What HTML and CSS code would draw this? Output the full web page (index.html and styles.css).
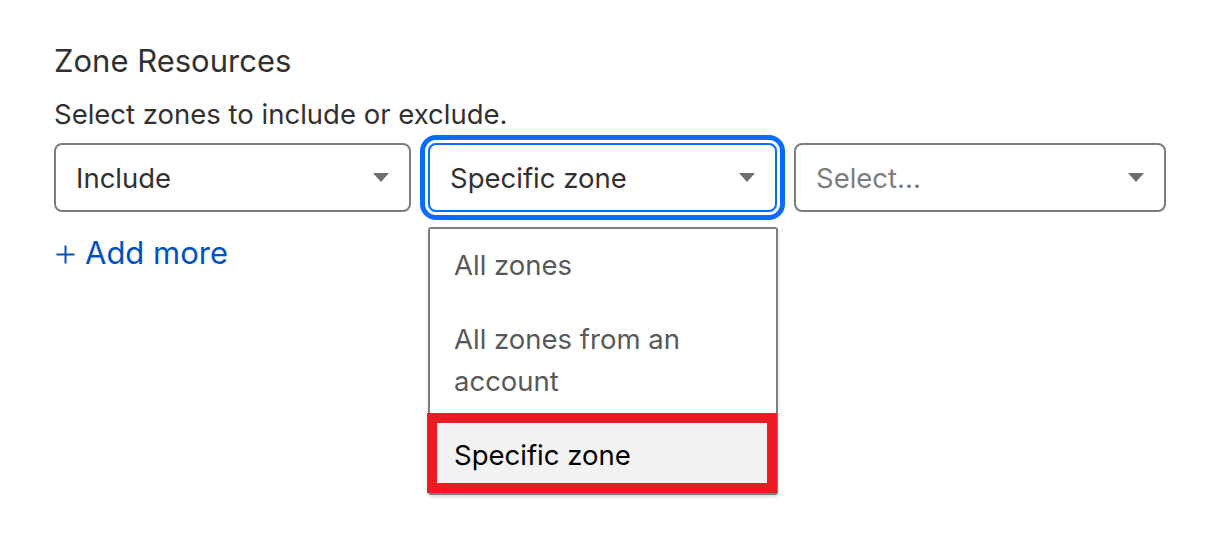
FILE: index.html
```html
<!DOCTYPE html>
<html lang="en">
<head>
    <meta charset="UTF-8">
    <meta name="viewport" content="width=device-width, initial-scale=1.0">
    <title>Zone Resources</title>

    <link rel="stylesheet" href="styles.css">
</head>
<body>
    <div class="zone-box">
        <h2 class="zone-title">Zone Resources</h2>
        <p class="zone-desc">Select zones to include or exclude.</p>

        <div class="zone-row">
            <div class="zone-select">
                <span class="select-value">Include</span>
                <span class="select-arrow"></span>
            </div>
            <div class="zone-select is-focus">
                <span class="select-value">Specific zone</span>
                <span class="select-arrow"></span>

                <ul class="select-menu">
                    <li class="menu-option">All zones</li>
                    <li class="menu-option">All zones from an account</li>
                    <li class="menu-option is-selected">Specific zone</li>
                </ul>
            </div>
            <div class="zone-select">
                <span class="select-value placeholder">Select...</span>
                <span class="select-arrow"></span>
            </div>
        </div>

        <a class="add-more" href="#">
            <svg width="19" height="19" viewBox="0 0 19 19">
                <path d="M9.5 0.5v18M0.5 9.5h18" stroke="#0051c3" stroke-width="2" fill="none"/>
            </svg>
            Add more
        </a>
    </div>
</body>
</html>
```

FILE: styles.css
```css
html, body {
    height: 100%;
}

body {
    margin: 0;
    font-family: Inter, "Noto Sans", sans-serif;
    background-color: #fff;
    color: #313131;
}

.zone-box {
    box-sizing: border-box;
    min-height: 540px;
    padding: 41px 0 0 54px;
}

.zone-title {
    margin: 0;
    font-size: 31px;
    line-height: 40px;
    font-weight: 400;
}

.zone-desc {
    margin: 12px 0 0;
    font-size: 27.5px;
    line-height: 42px;
}

.zone-row {
    display: grid;
    grid-template-columns: 357px 349px 372px;
    gap: 17px;
    margin-top: 8px;
}

.zone-select {
    position: relative;
    box-sizing: border-box;
    height: 69px;
    display: flex;
    align-items: center;
    justify-content: space-between;
    padding: 0 20px;
    border: 2px solid #7d7d7d;
    border-radius: 8px;
    font-size: 27.5px;
}

.zone-select.is-focus {
    border-color: #0a6cff;
    box-shadow: 0 0 0 3px #fff, 0 0 0 8px #0a6cff;
}

.placeholder {
    color: #7d7d7d;
}

.select-arrow {
    width: 0;
    height: 0;
    border-left: 8px solid transparent;
    border-right: 8px solid transparent;
    border-top: 9px solid #6e6e6e;
}

.select-menu {
    position: absolute;
    z-index: 2;
    top: calc(100% + 17px);
    left: -2px;
    right: -3px;
    margin: 0;
    padding: 0;
    list-style: none;
    background: #fff;
    border: 2px solid #808080;
    border-radius: 3px;
    box-shadow: 0 2px 3px rgba(0, 0, 0, 0.15);
}

.menu-option {
    position: relative;
    padding: 15px 24px 17px;
    font-size: 27.5px;
    line-height: 42px;
    color: #595959;
}

.menu-option.is-selected {
    background: #f2f2f2;
    color: #000;
}

.menu-option.is-selected::after {
    content: "";
    position: absolute;
    top: -6px;
    left: -3px;
    right: -1px;
    bottom: 0;
    border: 10px solid #ec1c24;
}

.add-more {
    display: inline-flex;
    align-items: center;
    gap: 10px;
    margin-top: 20px;
    font-size: 31px;
    line-height: 42px;
    color: #0051c3;
    text-decoration: none;
}

.add-more svg {
    margin: 3px 0 0 2px;
}
```
